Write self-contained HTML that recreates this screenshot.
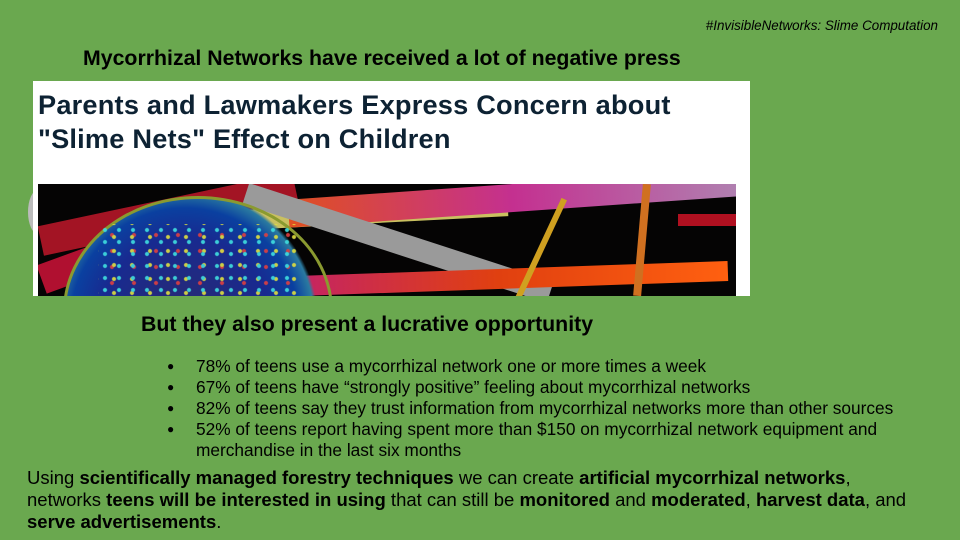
<!DOCTYPE html>
<html><head><meta charset="utf-8"><style>
*{margin:0;padding:0}
body{width:960px;height:540px;background:#6aa84f;position:relative;overflow:hidden;font-family:"Liberation Sans",sans-serif;color:#000}
.a{position:absolute;white-space:nowrap}
.card{position:absolute;left:33px;top:81px;width:717px;height:215px;background:#fff}
.hd{position:absolute;left:5px;top:7px;font-size:27.2px;font-weight:bold;color:#0d2233;line-height:34px;letter-spacing:0.2px;white-space:nowrap}
.img{position:absolute;left:5px;top:103px;width:698px;height:112px;background:#050404;overflow:hidden}
.img div{position:absolute}
ul{list-style:none}
li{position:relative;padding-left:29px;font-size:17.3px;line-height:21px}
li:before{content:"●";position:absolute;left:0;font-size:12px;top:0}
.p{font-size:18.5px;line-height:22px}
</style></head><body>
<div class="a" style="right:22px;top:18px;font-size:13.4px;font-style:italic">#InvisibleNetworks: Slime Computation</div>
<div class="a" style="left:83px;top:46px;font-size:21.3px;font-weight:bold">Mycorrhizal Networks have received a lot of negative press</div>
<div style="position:absolute;left:28px;top:190px;width:20px;height:44px;border-radius:50%;background:#bbb"></div>
<div class="card">
<div class="hd">Parents and Lawmakers Express Concern about<br>"Slime Nets" Effect on Children</div>
<div class="img">
<div style="left:0;top:15px;width:260px;height:30px;background:#c0182a;transform:rotate(-12deg);opacity:.85"></div>
<div style="left:170px;top:20px;width:300px;height:20px;background:#c9c060;transform:rotate(-3deg)"></div>
<div style="left:250px;top:0;width:450px;height:28px;background:linear-gradient(90deg,#e05020,#c43090,#b080b0);transform:rotate(-4deg)"></div>
<div style="left:200px;top:48px;width:320px;height:22px;background:#9a9a9a;transform:rotate(18deg)"></div>
<div style="left:0;top:60px;width:120px;height:30px;background:#b01030;transform:rotate(-20deg)"></div>
<div style="left:230px;top:85px;width:460px;height:20px;background:linear-gradient(90deg,#c02070,#e04010,#ff6010);transform:rotate(-2deg)"></div>
<div style="left:500px;top:10px;width:6px;height:110px;background:#d0a020;transform:rotate(25deg)"></div>
<div style="left:600px;top:0;width:8px;height:112px;background:#d07020;transform:rotate(5deg)"></div>
<div style="left:640px;top:30px;width:60px;height:12px;background:#b01020"></div>
<div style="left:25px;top:12px;width:270px;height:230px;border-radius:50%;background:radial-gradient(circle at 45% 55%,#2a2a70 0%,#182a90 45%,#0a40a0 60%,#2a7aa0 68%,transparent 70%);border:3px solid #8a9a30;box-sizing:border-box"></div>
<div style="left:60px;top:40px;width:200px;height:72px;background:radial-gradient(circle,#40e0e0 1.5px,transparent 2.5px) 0 0/14px 12px,radial-gradient(circle,#e0e040 1.5px,transparent 2.5px) 7px 6px/18px 14px,radial-gradient(circle,#e04040 1.5px,transparent 2.5px) 3px 3px/22px 16px;opacity:.9"></div>
</div>
</div>
<div class="a" style="left:141px;top:312px;font-size:21.3px;font-weight:bold">But they also present a lucrative opportunity</div>
<ul style="position:absolute;left:167px;top:356px;width:730px">
<li>78% of teens use a mycorrhizal network one or more times a week</li>
<li>67% of teens have “strongly positive” feeling about mycorrhizal networks</li>
<li>82% of teens say they trust information from mycorrhizal networks more than other sources</li>
<li>52% of teens report having spent more than $150 on mycorrhizal network equipment and<br>merchandise in the last six months</li>
</ul>
<div class="p" style="position:absolute;left:27px;top:467px;width:930px">Using <b>scientifically managed forestry techniques</b> we can create <b>artificial mycorrhizal networks</b>,<br>networks <b>teens will be interested in using</b> that can still be <b>monitored</b> and <b>moderated</b>, <b>harvest data</b>, and<br><b>serve advertisements</b>.</div>
</body></html>
